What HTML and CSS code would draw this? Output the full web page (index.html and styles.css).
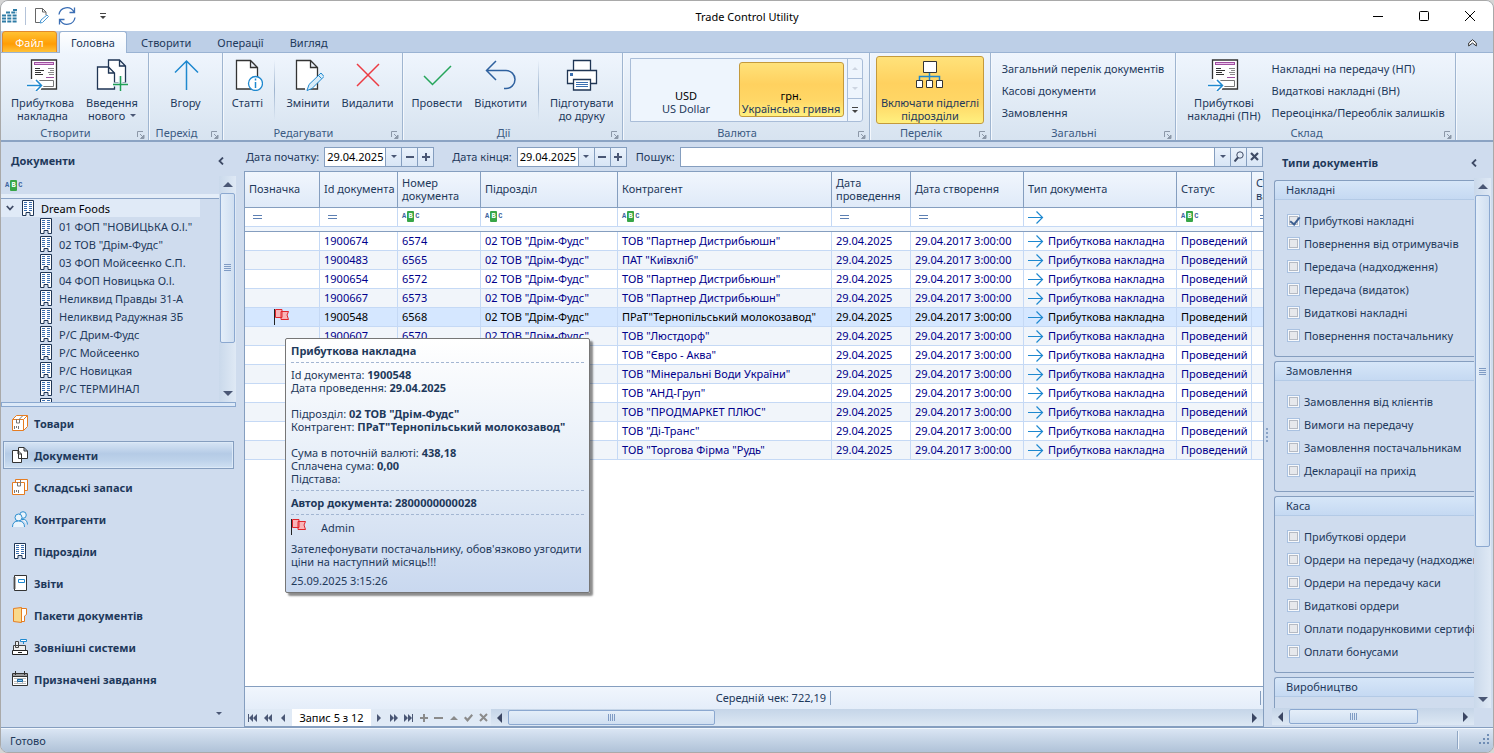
FILE: index.html
```html
<!DOCTYPE html>
<html lang="uk">
<head>
  <meta charset="UTF-8" />
  <meta name="viewport" content="width=device-width, initial-scale=1" />
  <title>Trade Control Utility</title>
  <link rel="stylesheet" href="styles.css">
</head>
<body>
  <!-- Icons used more than once -->
  <svg class="sprite" aria-hidden="true">
    <symbol id="i-invoice" viewBox="0 0 32 32">
      <path d="M4.500 20V1H29.500V30H14" fill="#fff" stroke="#333" stroke-width="1.300"/>
      <rect x="7.500" y="3.500" width="19" height="2" fill="#e9c3ea" stroke="#a04fa0"/>
      <path d="M8 9.500h5M8 11.500h9M8 13.500h6M8 15.500h8" stroke="#333"/>
      <path d="M21 9.500h6M23 11.500h4M21 13.500h6M22 15.500h5" stroke="#888"/>
      <path d="M19 18.500h8" stroke="#a04fa0"/>
      <path d="M12 21.500h14.500v6H14" fill="#fff" stroke="#777"/>
      <path d="M0 26.500H14M9 21l5.500 5.500L9 32" fill="none" stroke="#fff" stroke-width="4"/>
      <path d="M0 26.500H14M9 21l5.500 5.500L9 32" fill="none" stroke="#1e88cf" stroke-width="1.500"/>
    </symbol>
    <symbol id="i-building" viewBox="0 0 12 16">
      <path d="M.5.500h11v15H8v-3H4v3H.500z" fill="#fff" stroke="#1f3554"/>
      <path d="M2 2.500h3M7 2.500h3M2 4.500h3M7 4.500h3M2 6.500h3M7 6.500h3M2 8.500h3M7 8.500h3M2 10.500h3M7 10.500h3" stroke="#3b6fb0"/>
    </symbol>
    <symbol id="i-arrow" viewBox="0 0 16 14">
      <path d="M0 7.500h15M8.500 1.500l6 6-6 6" fill="none" stroke="#1e88cf" stroke-width="1.200"/>
    </symbol>
    <symbol id="i-flag" viewBox="0 0 16 16">
      <path d="M1.500.500H8v8H1.500zM8 2.500h6.500L13 6l1.500 4.500H7V2.500z" fill="#f9b4b8" stroke="#e0262c"/>
      <path d="M.5 0v16" stroke="#222"/>
    </symbol>
    <symbol id="i-box" viewBox="0 0 16 16">
      <path d="M.5 4.500l4-4h11v11l-4 4M11.500 4.500l4-4" fill="#fff" stroke="#e57d22"/>
      <path d="M.5 4.500h11v11H.500z" fill="#fff" stroke="#e57d22"/>
      <path d="M4.500 4v4h3V4l3-3M2.500 11v3M4.500 11v2M6.500 11v3" fill="none" stroke="#777"/>
    </symbol>
    <symbol id="i-stock" viewBox="0 0 16 16">
      <path d="M3.500.500h12v11h-12z" fill="#fff" stroke="#e57d22"/>
      <path d="M.5 3.500h12v12H.500z" fill="#fff" stroke="#e57d22"/>
      <path d="M5.500 3v4h3V3M8.500 1v2M2.500 11v3M4.500 11v2M6.500 11v3" fill="none" stroke="#777"/>
    </symbol>
    <symbol id="i-docs" viewBox="0 0 32 32">
      <path d="M12.500 1h11l6 6V24H12.500zM23.500 1v6h6" fill="#fff" stroke="#1f3554" stroke-width="1.300"/>
      <path d="M1.500 8h11l6 6V30H1.500zM12.500 8v6h6" fill="#fff" stroke="#1f3554" stroke-width="1.300"/>
    </symbol>
    <symbol id="i-launch" viewBox="0 0 8 8">
      <path d="M.5 6V.500H6" fill="none" stroke="#8c98a8"/>
      <path d="M3 3l3 3M7 4v3.500H3.500z" fill="#8c98a8" stroke="#8c98a8"/>
    </symbol>
  </svg>

  <header class="titlebar">
    <div class="quick">
      <svg width="15" height="14" viewBox="0 0 15 14"><path d="M0 12.500h15M0 9.500h15M0 6.500h15M4 3.500h11M11 .800h4" stroke="#2f7ca6" stroke-width="2.200" stroke-dasharray="4 1.300"/></svg>
      <span class="quick-line"></span>
      <button aria-label="Змінити"><svg width="16" height="16" viewBox="0 0 16 16"><path d="M6 14.500H1.500V.500h7l3.500 3.500v3M8.500 .500V4H12" fill="none" stroke="#666"/><path d="M6 15l1-3 6-5 1.500 1.500-6 6z" fill="#fff" stroke="#4a98d3"/></svg></button>
      <button aria-label="Оновити"><svg width="18" height="18" viewBox="0 0 18 18"><path d="M1 7.500A8 8 0 0 1 16 5M17 10.500A8 8 0 0 1 2 13M16.500 .500V5.500H11.500M1.500 17.500V12.500H6.500" fill="none" stroke="#3c6fb5" stroke-width="1.300"/></svg></button>
      <button class="quick-more" aria-label="Налаштувати"><svg width="6" height="6" viewBox="0 0 6 6"><path d="M0 .500h6" stroke="#444"/><path d="M0 3h6L3 6z" fill="#444"/></svg></button>
    </div>
    <h1>Trade Control Utility</h1>
    <div class="window-buttons">
      <button aria-label="Згорнути"><svg width="10" height="10"><path d="M0 5.500h10" stroke="#000"/></svg></button>
      <button aria-label="Розгорнути"><svg width="10" height="10"><rect x=".5" y=".5" width="9" height="9" rx="1" fill="none" stroke="#000"/></svg></button>
      <button aria-label="Закрити"><svg width="10" height="10"><path d="M0 0l10 10M10 0L0 10" stroke="#000"/></svg></button>
    </div>
  </header>

  <nav class="tabs">
    <button class="tab tab-file">Файл</button>
    <button class="tab tab-active">Головна</button>
    <button class="tab">Створити</button>
    <button class="tab">Операції</button>
    <button class="tab">Вигляд</button>
    <button class="collapse" aria-label="Згорнути стрічку"><svg width="9" height="8" viewBox="0 0 9 8"><path d="M.7 4l3.800-3.300L8.300 4v3L4.500 4 .700 7z" fill="#fff" stroke="#333"/></svg></button>
  </nav>

  <section class="ribbon">
    <div class="group g-create">
      <div class="group-body">
        <button class="big"><svg width="32" height="32"><use href="#i-invoice"/></svg><span>Прибуткова<br>накладна</span></button>
        <button class="big"><svg width="32" height="32" viewBox="0 0 32 32"><use href="#i-docs" width="32" height="32"/><path d="M24.500 17v15M17 25.500h15" stroke="#e9f1fa" stroke-width="4"/><path d="M24.500 17v15M17 25.500h15" stroke="#1fa055" stroke-width="1.500"/></svg><span>Введення<br>нового <i class="down"></i></span></button>
      </div>
      <div class="caption">Створити<svg width="8" height="8"><use href="#i-launch"/></svg></div>
    </div>
    <div class="group g-go">
      <div class="group-body">
        <button class="big"><svg width="32" height="32" viewBox="0 0 32 32"><path d="M16.500 31V2M5 13.500L16.500 2 28 13.500" fill="none" stroke="#1e88cf" stroke-width="1.500"/></svg><span>Вгору</span></button>
      </div>
      <div class="caption">Перехід<svg width="8" height="8"><use href="#i-launch"/></svg></div>
    </div>
    <div class="group g-edit">
      <div class="group-body">
        <button class="big"><svg width="32" height="32" viewBox="0 0 32 32"><path d="M5.500 1.500h14l7 7V30H5.500zM19.500 1.500v7h7" fill="#fff" stroke="#333" stroke-width="1.300"/><circle cx="24.500" cy="24.500" r="7" fill="#fff" stroke="#1e88cf" stroke-width="1.300"/><path d="M24.500 23v6M24.500 19.500v2" stroke="#1e88cf" stroke-width="1.500"/></svg><span>Статті</span></button>
        <span class="divider"></span>
        <button class="big"><svg width="32" height="32" viewBox="0 0 32 32"><path d="M13 30H4.500V1.500h14l7 7V30H18M18.500 1.500v7h7" fill="#fff" stroke="#333" stroke-width="1.300"/><path d="M15 31.500l2-6L29 14l3 3.500L20 29.500z" fill="#d9ecf9" stroke="#1e88cf"/><path d="M26.500 16.500l3 3" stroke="#1e88cf"/></svg><span>Змінити</span></button>
        <button class="big"><svg width="32" height="32" viewBox="0 0 32 32"><path d="M5 5l22 22M27 5L5 27" stroke="#ec3b43" stroke-width="1.500"/></svg><span>Видалити</span></button>
      </div>
      <div class="caption">Редагувати<svg width="8" height="8"><use href="#i-launch"/></svg></div>
    </div>
    <div class="group g-act">
      <div class="group-body">
        <button class="big"><svg width="32" height="32" viewBox="0 0 32 32"><path d="M3 17l8.500 8.500L30 7" fill="none" stroke="#25a55b" stroke-width="1.500"/></svg><span>Провести</span></button>
        <button class="big"><svg width="32" height="32" viewBox="0 0 32 32"><path d="M11 2L1.500 11.500 11 21M2 11.500H21a9 9 0 0 1 0 18h-2" fill="none" stroke="#2f619f" stroke-width="1.500"/></svg><span>Відкотити</span></button>
        <span class="divider"></span>
        <button class="big"><svg width="32" height="32" viewBox="0 0 32 32"><path d="M7.500 12V1.500h17V12M1.500 11.500h29v13h-29z" fill="#fff" stroke="#1f3554" stroke-width="1.300"/><path d="M7.500 20.500h17v10.500h-17z" fill="#fff" stroke="#1f3554" stroke-width="1.300"/><path d="M4 14h3v3H4z" fill="#3b6fb0"/><path d="M10 23.500h12M10 25.500h12M10 27.500h12" stroke="#3b6fb0"/></svg><span>Підготувати<br>до друку</span></button>
      </div>
      <div class="caption">Дії<svg width="8" height="8"><use href="#i-launch"/></svg></div>
    </div>
    <div class="group g-currency">
      <div class="group-body">
        <div class="gallery">
          <button class="currency"><b>USD</b>US Dollar</button>
          <button class="currency currency-on"><b>грн.</b>Українська гривня</button>
          <div class="gallery-scroll">
            <button aria-label="Вгору" disabled><i class="up"></i></button>
            <button aria-label="Вниз" disabled><i class="down"></i></button>
            <button aria-label="Більше"><svg width="6" height="6" viewBox="0 0 6 6"><path d="M0 .500h6" stroke="#444"/><path d="M0 3h6L3 6z" fill="#444"/></svg></button>
          </div>
        </div>
      </div>
      <div class="caption">Валюта<svg width="8" height="8"><use href="#i-launch"/></svg></div>
    </div>
    <div class="group g-list">
      <div class="group-body">
        <button class="big big-on"><svg width="32" height="32" viewBox="0 0 32 32"><path d="M15.500 14v4M5.500 22v-4.500h20V22M15.500 18v4" fill="none" stroke="#1e88cf" stroke-width="1.500"/><path d="M9.500 2.500h13v11h-13zM2.500 21.500h6v7h-6zM12.500 21.500h6v7h-6zM22.500 21.500h6v7h-6z" fill="#fff" stroke="#333"/></svg><span>Включати підлеглі<br>підрозділи</span></button>
      </div>
      <div class="caption">Перелік<svg width="8" height="8"><use href="#i-launch"/></svg></div>
    </div>
    <div class="group g-general">
      <div class="group-body">
        <div class="small-list">
          <button>Загальний перелік документів</button>
          <button>Касові документи</button>
          <button>Замовлення</button>
        </div>
      </div>
      <div class="caption">Загальні<svg width="8" height="8"><use href="#i-launch"/></svg></div>
    </div>
    <div class="group g-stock">
      <div class="group-body">
        <button class="big"><svg width="32" height="32"><use href="#i-invoice"/></svg><span>Прибуткові<br>накладні (ПН)</span></button>
        <div class="small-list">
          <button>Накладні на передачу (НП)</button>
          <button>Видаткові накладні (ВН)</button>
          <button>Переоцінка/Переоблік залишків</button>
        </div>
      </div>
      <div class="caption">Склад<svg width="8" height="8"><use href="#i-launch"/></svg></div>
    </div>
  </section>

  <main class="workspace">
    <aside class="sidebar">
      <h2>Документи<svg width="6" height="8" viewBox="0 0 6 8"><path d="M5 .500L1.500 4 5 7.500" fill="none" stroke="#3f4b66" stroke-width="1.800"/></svg></h2>
      <div class="tree-box">
        <div class="tree-main">
          <div class="tree-filter"><span class="abc"><i>A</i><i>B</i><i>C</i></span></div>
          <ul class="tree" id="tree">
            <li class="tree-root"><svg width="8" height="6" viewBox="0 0 8 6"><path d="M.8 1L4 4.500 7.200 1" fill="none" stroke="#3f4b66" stroke-width="1.800"/></svg><svg width="12" height="16"><use href="#i-building"/></svg>Dream Foods</li>
          </ul>
        </div>
        <div class="vscroll">
          <button aria-label="Вгору"><i class="up"></i></button>
          <div class="track"><div class="thumb tree-thumb"></div></div>
          <button aria-label="Вниз"><i class="down"></i></button>
        </div>
      </div>
      <div class="splitter"></div>
      <nav class="sections">
        <a href="#"><svg width="16" height="16"><use href="#i-box"/></svg>Товари</a>
        <a href="#" class="current"><svg width="16" height="16" viewBox="0 0 16 16"><path d="M6.500.500H12L15.500 4v7.500h-9zM12 .500V4h3.500M.5 3.500H6L9.500 7v8.500h-9zM6 3.500V7h3.500" fill="#fff" stroke="#333"/></svg>Документи</a>
        <a href="#"><svg width="16" height="16"><use href="#i-stock"/></svg>Складські запаси</a>
        <a href="#"><svg width="16" height="16" viewBox="0 0 16 16"><g fill="#eaf4fc" stroke="#2d8fd0"><circle cx="11" cy="4" r="3.300"/><path d="M10 8.500q5-1 5.500 5"/><circle cx="6.500" cy="6.500" r="3.500"/><path d="M.5 16q0-6 6-6t6 6"/></g></svg>Контрагенти</a>
        <a href="#"><svg width="16" height="16"><use href="#i-building"/></svg>Підрозділи</a>
        <a href="#"><svg width="16" height="16" viewBox="0 0 16 16"><path d="M2.500.500h12v15h-12z" fill="#fff" stroke="#333"/><path d="M1 3h3M1 5h3M1 7h3M1 9h3M1 11h3M1 13h3" stroke="#666"/><path d="M6.500 4.500h6v3h-6z" fill="#fff" stroke="#1e88cf"/></svg>Звіти</a>
        <a href="#"><svg width="16" height="16" viewBox="0 0 16 16"><path d="M9 1.500h5.500v6l-2 1.500v5.500H9z" fill="#fff" stroke="#e57d22"/><path d="M1.500 1.500L9.500.500v15l-8-1z" fill="#f9d98b" stroke="#e57d22"/></svg>Пакети документів</a>
        <a href="#"><svg width="16" height="16" viewBox="0 0 16 16"><path d="M1.500 6.500h12V12h-12zM3.500 2.500h3v6h-3z" fill="#eee" stroke="#444"/><path d="M.5 11.500h15v4H.500z" fill="#fff" stroke="#222"/><path d="M6 13.500h4" stroke="#222"/><path d="M8.500.500h6v2h-6zM11.500 3v2" fill="#fff" stroke="#1e88cf"/></svg>Зовнішні системи</a>
        <a href="#"><svg width="16" height="16" viewBox="0 0 16 16"><path d="M.5 2.500h15v12H.500z" fill="#fff" stroke="#333"/><path d="M1 3h14v2H1z" fill="#999"/><path d="M0 5.500h16M3.500 0v4M12.500 0v4" stroke="#333"/><path d="M2 7.500h12M2 10.500h12M2 12.500h12M5.500 7v6M10.500 7v6" stroke="#bbb"/><path d="M5.500 8.500h5v2h-5z" fill="#8cc6ee" stroke="#1565a0"/></svg>Призначені завдання</a>
      </nav>
      <button class="sections-more" aria-label="Ще"><i class="down"></i></button>
    </aside>

    <section class="center">
      <form class="filters">
        <label for="from">Дата початку:</label>
        <div class="field"><input id="from" type="text" value="29.04.2025"><button type="button" aria-label="Календар"><i class="down"></i></button><button type="button" aria-label="Менше"><i class="minus"></i></button><button type="button" aria-label="Більше"><i class="minus plus"></i></button></div>
        <label for="to">Дата кінця:</label>
        <div class="field"><input id="to" type="text" value="29.04.2025"><button type="button" aria-label="Календар"><i class="down"></i></button><button type="button" aria-label="Менше"><i class="minus"></i></button><button type="button" aria-label="Більше"><i class="minus plus"></i></button></div>
        <label for="search">Пошук:</label>
        <div class="field field-search"><input id="search" type="text"><button type="button" aria-label="Історія"><i class="down"></i></button><button type="button" aria-label="Шукати"><svg width="10" height="11" viewBox="0 0 10 11"><circle cx="6" cy="4" r="3.200" fill="none" stroke="#3f4b66"/><path d="M4 6.500L.5 10.500" stroke="#3f4b66" stroke-width="2"/></svg></button><button type="button" aria-label="Очистити"><svg width="9" height="9" viewBox="0 0 9 9"><path d="M1 1l7 7M8 1L1 8" stroke="#3f4b66" stroke-width="2.200"/></svg></button></div>
      </form>

      <div class="grid">
        <div class="grid-scroll">
          <table>
            <colgroup>
              <col class="c-mark"><col class="c-id"><col class="c-num"><col class="c-dep"><col class="c-agent"><col class="c-date"><col class="c-created"><col class="c-type"><col class="c-status"><col>
            </colgroup>
            <thead>
              <tr>
                <th>Позначка</th><th>Id документа</th><th>Номер<br>документа</th><th>Підрозділ</th><th>Контрагент</th><th>Дата<br>проведення</th><th>Дата створення</th><th>Тип документа</th><th>Статус</th><th>Сума<br>валюти</th>
              </tr>
              <tr class="filter-row">
                <td><span class="eq"></span></td><td><span class="eq"></span></td>
                <td><span class="abc"><i>A</i><i>B</i><i>C</i></span></td>
                <td><span class="abc"><i>A</i><i>B</i><i>C</i></span></td>
                <td><span class="abc"><i>A</i><i>B</i><i>C</i></span></td>
                <td><span class="eq"></span></td><td><span class="eq"></span></td>
                <td><svg width="16" height="14"><use href="#i-arrow"/></svg></td>
                <td><span class="abc"><i>A</i><i>B</i><i>C</i></span></td><td><span class="eq"></span></td>
              </tr>
              <tr class="band"><td colspan="10"></td></tr>
            </thead>
            <tbody id="rows"></tbody>
          </table>
        </div>
        <div class="summary"><span class="average">Середній чек: 722,19</span><span class="end-line"></span></div>
        <div class="navigator">
          <div class="nav-buttons">
            <button aria-label="Перший"><svg width="9" height="8"><path d="M0 0h1v8H0zM5 0v8L1 4zM9 0v8L5 4z"/></svg></button>
            <button aria-label="Назад на сторінку"><svg width="8" height="8"><path d="M4 0v8L0 4zM8 0v8L4 4z"/></svg></button>
            <button aria-label="Назад"><svg width="4" height="8"><path d="M4 0v8L0 4z"/></svg></button>
            <span class="record">Запис 5 з 12</span>
            <button aria-label="Вперед"><svg width="4" height="8"><path d="M0 0v8l4-4z"/></svg></button>
            <button aria-label="Вперед на сторінку"><svg width="8" height="8"><path d="M0 0v8l4-4zM4 0v8l4-4z"/></svg></button>
            <button aria-label="Останній"><svg width="9" height="8"><path d="M0 0v8l4-4zM4 0v8l4-4zM8 0h1v8H8z"/></svg></button>
            <button class="off" aria-label="Додати"><svg width="8" height="8"><path d="M3 0h2v3h3v2H5v3H3V5H0V3h3z"/></svg></button>
            <button class="off" aria-label="Видалити"><svg width="9" height="8"><path d="M0 3h9v2H0z"/></svg></button>
            <button class="off" aria-label="Редагувати"><svg width="8" height="8"><path d="M0 6h8L4 2z"/></svg></button>
            <button class="off" aria-label="Зберегти"><svg width="9" height="8"><path d="M0 4l1.500-1.500L3.500 4.500 7.500 0 9 1.500 3.500 8z"/></svg></button>
            <button class="off" aria-label="Скасувати"><svg width="9" height="9"><path d="M1 1l7 7M8 1L1 8" stroke="#8b8b8b" stroke-width="2"/></svg></button>
          </div>
          <div class="hscroll">
            <button aria-label="Вліво"><i class="left"></i></button>
            <div class="track"><div class="thumb grid-thumb"></div></div>
            <button aria-label="Вправо"><i class="right"></i></button>
          </div>
        </div>
      </div>

      <div class="tooltip" role="tooltip">
        <p><b>Прибуткова накладна</b></p>
        <hr>
        <p>Id документа: <b>1900548</b><br>Дата проведення: <b>29.04.2025</b><br><br>Підрозділ: <b>02 ТОВ "Дрім-Фудс"</b><br>Контрагент: <b>ПРаТ"Тернопільський молокозавод"</b><br><br>Сума в поточній валюті: <b>438,18</b><br>Сплачена сума: <b>0,00</b><br>Підстава:</p>
        <hr>
        <p><b>Автор документа: 2800000000028</b></p>
        <hr>
        <p class="author"><svg width="16" height="16"><use href="#i-flag"/></svg>Admin</p>
        <p class="note">Зателефонувати постачальнику, обов'язково узгодити<br>ціни на наступний місяць!!!</p>
        <p>25.09.2025 3:15:26</p>
      </div>
    </section>

    <div class="grip"></div>

    <aside class="types">
      <h2>Типи документів<svg width="6" height="8" viewBox="0 0 6 8"><path d="M5 .500L1.500 4 5 7.500" fill="none" stroke="#3f4b66" stroke-width="1.800"/></svg></h2>
      <div class="types-box">
        <div class="types-list">
          <fieldset>
            <legend>Накладні</legend>
            <label><input type="checkbox" checked>Прибуткові накладні</label>
            <label><input type="checkbox">Повернення від отримувачів</label>
            <label><input type="checkbox">Передача (надходження)</label>
            <label><input type="checkbox">Передача (видаток)</label>
            <label><input type="checkbox">Видаткові накладні</label>
            <label><input type="checkbox">Повернення постачальнику</label>
          </fieldset>
          <fieldset>
            <legend>Замовлення</legend>
            <label><input type="checkbox">Замовлення від клієнтів</label>
            <label><input type="checkbox">Вимоги на передачу</label>
            <label><input type="checkbox">Замовлення постачальникам</label>
            <label><input type="checkbox">Декларації на прихід</label>
          </fieldset>
          <fieldset>
            <legend>Каса</legend>
            <label><input type="checkbox">Прибуткові ордери</label>
            <label><input type="checkbox">Ордери на передачу (надходження)</label>
            <label><input type="checkbox">Ордери на передачу каси</label>
            <label><input type="checkbox">Видаткові ордери</label>
            <label><input type="checkbox">Оплати подарунковими сертифікатами</label>
            <label><input type="checkbox">Оплати бонусами</label>
          </fieldset>
          <fieldset>
            <legend>Виробництво</legend>
          </fieldset>
        </div>
        <div class="vscroll">
          <button aria-label="Вгору"><i class="up"></i></button>
          <div class="track"><div class="thumb types-thumb"></div></div>
          <button aria-label="Вниз"><i class="down"></i></button>
        </div>
        <div class="hscroll">
          <button aria-label="Вліво"><i class="left"></i></button>
          <div class="track"><div class="thumb types-hthumb"></div></div>
          <button aria-label="Вправо"><i class="right"></i></button>
        </div>
      </div>
    </aside>
  </main>

  <footer class="statusbar">
    <span>Готово</span>
    <span class="status-line"></span>
    <svg width="12" height="12" viewBox="0 0 12 12"><path d="M8 0h2v2H8zM4 4h2v2H4zM8 4h2v2H8zM0 8h2v2H0zM4 8h2v2H4zM8 8h2v2H8z" fill="#6f8db5"/></svg>
  </footer>

  <script>
    const departments = [
      '01 ФОП "НОВИЦЬКА О.І."', '02 ТОВ "Дрім-Фудс"', "03 ФОП Мойсеєнко С.П.",
      "04 ФОП Новицька О.І.", "Неликвид Правды 31-А", "Неликвид Радужная 3Б",
      "Р/С Дрим-Фудс", "Р/С Мойсеенко", "Р/С Новицкая", "Р/С ТЕРМИНАЛ", "Резервный МК"
    ];

    const documents = [
      ["1900674", "6574", 'ТОВ "Партнер Дистрибьюшн"'],
      ["1900483", "6565", 'ПАТ "Київхліб"'],
      ["1900654", "6572", 'ТОВ "Партнер Дистрибьюшн"'],
      ["1900667", "6573", 'ТОВ "Партнер Дистрибьюшн"'],
      ["1900548", "6568", 'ПРаТ"Тернопільський молокозавод"'],
      ["1900607", "6570", 'ТОВ "Люстдорф"'],
      ["1900612", "6571", 'ТОВ "Євро - Аква"'],
      ["1900539", "6567", 'ТОВ "Мінеральні Води України"'],
      ["1900521", "6566", 'ТОВ "АНД-Груп"'],
      ["1900476", "6564", 'ТОВ "ПРОДМАРКЕТ ПЛЮС"'],
      ["1900588", "6569", 'ТОВ "Ді-Транс"'],
      ["1900462", "6563", 'ТОВ "Торгова Фірма "Рудь"']
    ];
    const selectedId = "1900548";

    const tree = document.getElementById("tree");
    departments.forEach(name => {
      tree.insertAdjacentHTML("beforeend",
        `<li><svg width="12" height="16"><use href="#i-building"/></svg>${name}</li>`);
    });

    const rows = document.getElementById("rows");
    documents.forEach(([id, number, agent]) => {
      const selected = id === selectedId;
      const flag = selected ? '<svg width="16" height="16"><use href="#i-flag"/></svg>' : "";
      rows.insertAdjacentHTML("beforeend", `
        <tr class="${selected ? "selected" : ""}">
          <td class="mark">${flag}</td><td>${id}</td><td>${number}</td>
          <td>02 ТОВ "Дрім-Фудс"</td><td>${agent}</td>
          <td>29.04.2025</td><td>29.04.2017 3:00:00</td>
          <td><svg width="16" height="14"><use href="#i-arrow"/></svg>Прибуткова накладна</td>
          <td>Проведений</td><td></td>
        </tr>`);
    });
  </script>
</body>
</html>
```
FILE: styles.css
```css
* {
  box-sizing: border-box;
}

html {
  background: #d5d5d5;
}

body {
  margin: 0;
  height: 100vh;
  display: flex;
  flex-direction: column;
  overflow: hidden;
  border: 1px solid #a9a9a9;
  border-radius: 8px;
  background: #cfdcee;
  color: #1e395b;
  font: 11px/13px "Noto Sans", "Open Sans", sans-serif;
}

h1, h2, p, ul, fieldset {
  margin: 0;
  padding: 0;
}

button {
  padding: 0;
  border: 0;
  background: none;
  color: inherit;
  font: inherit;
}

svg {
  flex: none;
}

.sprite {
  position: absolute;
  width: 0;
  height: 0;
}

/* Small triangles */
.up, .down, .left, .right {
  display: inline-block;
  border: 5px solid transparent;
}

.down {
  border-top-color: #4a5775;
  border-bottom: 0;
}

.up {
  border-bottom-color: #4a5775;
  border-top: 0;
}

.left {
  border-right-color: #3b4663;
  border-left: 0;
}

.right {
  border-left-color: #3b4663;
  border-right: 0;
}

/* Title bar */
.titlebar {
  flex: none;
  height: 30px;
  display: grid;
  grid-template-columns: 1fr auto 1fr;
  align-items: center;
  background: #fff;
}

.titlebar h1 {
  font-size: 11px;
  font-weight: 400;
  color: #000;
}

.titlebar button {
  display: flex;
}

.quick {
  display: flex;
  align-items: center;
  gap: 8px;
  padding-left: 1px;
}

.quick-line {
  width: 1px;
  height: 18px;
  background: #b4c3d9;
}

.quick-more {
  margin-left: 16px;
}

.window-buttons {
  display: flex;
  justify-content: flex-end;
  gap: 36px;
  padding-right: 18px;
}

/* Tabs */
.tabs {
  flex: none;
  display: flex;
  gap: 2px;
  height: 22px;
  padding-left: 1px;
  background: #bdcfe7;
}

.tab {
  padding: 0 12px;
}

.tab-file {
  width: 55px;
  border: 1px solid #e08a2c;
  border-radius: 3px 3px 0 0;
  background: linear-gradient(#ffc233, #ff9d05 60%, #ffc23a);
  color: #fff;
}

.tab-active {
  position: relative;
  z-index: 1;
  width: 68px;
  padding: 0;
  border: 1px solid #9ab3d3;
  border-bottom: 0;
  border-radius: 3px 3px 0 0;
  background: linear-gradient(#fff, #eff5fd);
}

.collapse {
  margin-left: auto;
  padding-right: 16px;
}

/* Ribbon */
.ribbon {
  flex: none;
  display: flex;
  height: 90px;
  margin-top: -1px;
  border-top: 1px solid #9ab3d3;
  border-bottom: 2px solid #8ba3c3;
  background: linear-gradient(#eff5fd, #e4edf7 45%, #d7e3f0);
}

.group {
  flex: none;
  display: flex;
  flex-direction: column;
  border-right: 1px solid #9fb5d0;
  box-shadow: 1px 0 #f4f8fd;
}

.group-body {
  flex: 1;
  display: flex;
  justify-content: center;
  padding: 3px 6px 0;
}

.caption {
  position: relative;
  height: 14px;
  padding-right: 18px;
  line-height: 14px;
  text-align: center;
  color: #3b5a82;
}

.caption svg {
  position: absolute;
  right: 3px;
  bottom: 1px;
}

.g-create { width: 148px; }
.g-go { width: 74px; }
.g-edit { width: 180px; }
.g-act { width: 220px; }
.g-currency { width: 247px; }
.g-list { width: 121px; }
.g-general { width: 185px; }
.g-stock { width: 280px; }

.g-create .group-body,
.g-edit .group-body,
.g-act .group-body,
.g-stock .group-body {
  gap: 10px;
}

.big {
  display: flex;
  flex-direction: column;
  align-items: center;
  justify-content: flex-start;
  gap: 5px;
  height: 68px;
  padding-top: 2px;
  border: 1px solid transparent;
  white-space: nowrap;
}

.big .down {
  border-width: 3px;
  border-bottom: 0;
  margin: 0 0 3px 2px;
}

.big-on, .currency-on {
  border: 1px solid #c49a3c;
  border-radius: 3px;
  background: linear-gradient(#ffe27a, #ffd15f 40%, #ffd766 70%, #fff07f);
}

.big-on {
  width: 108px;
}

.divider {
  width: 1px;
  height: 60px;
  margin-top: 4px;
  background: linear-gradient(transparent, #9db3ce, transparent);
}

.gallery {
  display: flex;
  width: 233px;
  height: 64px;
  margin-top: 2px;
  border: 1px solid #a9bdd8;
  border-radius: 0 3px 3px 0;
  background: #eef5fd;
}

.currency {
  flex: 1;
  margin: 3px 3px 4px 6px;
  padding-top: 24px;
  white-space: nowrap;
}

.currency b {
  display: block;
  color: #000;
  font-weight: 400;
}

.currency-on {
  flex: none;
  width: 105px;
  margin-left: 0;
}

.gallery-scroll {
  display: grid;
  width: 15px;
  border-left: 1px solid #a9bdd8;
}

.gallery-scroll button {
  display: flex;
  align-items: center;
  justify-content: center;
}

.gallery-scroll button + button {
  border-top: 1px solid #a9bdd8;
}

.gallery-scroll i {
  border-width: 3px;
  opacity: 0.2;
}

.gallery-scroll .up {
  border-top: 0;
}

.gallery-scroll .down {
  border-bottom: 0;
}

.small-list {
  display: flex;
  flex-direction: column;
  gap: 9px;
  padding-top: 6px;
}

.small-list button {
  text-align: left;
  white-space: nowrap;
}

/* Workspace */
.workspace {
  flex: 1;
  min-height: 0;
  display: flex;
}

h2 {
  display: flex;
  align-items: center;
  justify-content: space-between;
  font-size: 11px;
  line-height: 13px;
}

.sidebar {
  flex: none;
  width: 235px;
  display: flex;
  flex-direction: column;
}

.sidebar h2 {
  padding: 12px 12px 9px 10px;
}

.tree-box {
  flex: 1;
  min-height: 0;
  display: flex;
}

.tree-main {
  flex: 1;
  overflow: hidden;
}

.tree-filter {
  height: 23px;
  padding: 4px;
  border-bottom: 1px solid #8aa3c6;
  box-shadow: inset 0 -4px #e4edf8;
}

.abc {
  display: flex;
  align-items: center;
  gap: 1px;
  color: #3c64a0;
  font: 700 7px/11px "Liberation Mono", monospace;
}

.abc i {
  font-style: normal;
}

.abc i:nth-child(2) {
  width: 7px;
  border-radius: 1px;
  background: #38a648;
  color: #fff;
  text-align: center;
}

.tree {
  list-style: none;
}

.tree li {
  display: flex;
  align-items: center;
  gap: 7px;
  height: 18px;
  padding-left: 39px;
  white-space: nowrap;
}

.tree .tree-root {
  width: 199px;
  padding-left: 5px;
  background: #e0eaf7;
  color: #000;
}

.tree-root svg:first-child {
  margin-right: 1px;
}

/* Scroll bars */
.vscroll {
  flex: none;
  width: 17px;
  display: flex;
  flex-direction: column;
  background: linear-gradient(90deg, #cad9eb, #dfe9f5);
}

.vscroll > button {
  height: 17px;
}

.hscroll {
  flex: 1;
  display: flex;
  height: 17px;
  background: linear-gradient(#c5d5e8, #dde8f4);
}

.hscroll > button {
  width: 17px;
}

.vscroll > button, .hscroll > button {
  display: flex;
  align-items: center;
  justify-content: center;
}

.track {
  flex: 1;
}

.thumb {
  position: relative;
  border: 1px solid #8ba8d0;
  border-radius: 2px;
  background: linear-gradient(90deg, #e4eef9, #d0dff1);
}

.vscroll .thumb {
  width: 15px;
  margin: 0 auto;
}

.hscroll .thumb {
  height: 15px;
  margin-top: 1px;
  background: linear-gradient(#e4eef9, #d0dff1);
}

.thumb::after {
  content: "";
  position: absolute;
  inset: 0;
  width: 7px;
  height: 7px;
  margin: auto;
  background: repeating-linear-gradient(#7f9bc4 0 1px, transparent 1px 2px);
}

.hscroll .thumb::after {
  background: repeating-linear-gradient(90deg, #7f9bc4 0 1px, transparent 1px 2px);
}

.tree-thumb { height: 78%; }
.types-thumb { height: 71%; }
.grid-thumb { width: 28%; }
.types-hthumb { width: 77%; }

.splitter {
  height: 5px;
  border: 1px solid #8aa8cf;
  background: #dce9f8;
}

.sections {
  padding: 2px 1px 0;
}

.sections a {
  display: flex;
  align-items: center;
  gap: 6px;
  height: 28px;
  margin: 0 1px 4px;
  padding-left: 8px;
  border: 1px solid transparent;
  color: #1e395b;
  font-weight: 700;
  text-decoration: none;
}

.sections .current {
  border-color: #859ebf;
  background: linear-gradient(#d7e5f5, #b5cbe6 45%, #bdd2ea 70%, #cfe0f2);
  box-shadow: inset 0 0 0 1px #dce9f7;
}

.sections-more {
  height: 30px;
  padding-left: 200px;
  padding-bottom: 4px;
}

.sections-more .down {
  border-width: 3px;
  border-bottom: 0;
}

/* Filters over the grid */
.center {
  position: relative;
  flex: 1;
  min-width: 0;
  display: flex;
  flex-direction: column;
  padding-left: 8px;
}

.filters {
  display: flex;
  align-items: center;
  gap: 5px;
  height: 29px;
  padding: 0 1px 0 2px;
}

.filters label {
  white-space: nowrap;
}

.field + label {
  margin-left: 13px;
}

.field + label[for="search"] {
  margin-left: 4px;
}

.field {
  display: flex;
  height: 20px;
  border: 1px solid #859ebf;
  background: #fff;
}

.field input {
  width: 60px;
  padding: 0 0 0 2px;
  border: 0;
  outline: 0;
  background: none;
  color: #000;
  font: inherit;
}

.field button {
  display: flex;
  align-items: center;
  justify-content: center;
  width: 16px;
  border-left: 1px solid #859ebf;
  background: linear-gradient(#eaf2fc, #d8e5f5);
}

.field .down {
  border-width: 3px;
  border-bottom: 0;
}

.field-search {
  flex: 1;
}

.field-search input {
  flex: 1;
}

.minus {
  position: relative;
  width: 8px;
  height: 2px;
  background: #4a5775;
}

.plus::after {
  content: "";
  position: absolute;
  left: 3px;
  top: -3px;
  width: 2px;
  height: 8px;
  background: #4a5775;
}

/* Grid */
.grid {
  flex: 1;
  min-height: 0;
  display: flex;
  flex-direction: column;
  border: 1px solid #859ebf;
  background: #fff;
}

.grid-scroll {
  flex: 1;
  min-height: 0;
  overflow: hidden;
}

table {
  width: 100%;
  table-layout: fixed;
  border-collapse: separate;
  border-spacing: 0;
}

.c-mark { width: 75px; }
.c-id { width: 78px; }
.c-num { width: 83px; }
.c-dep { width: 137px; }
.c-agent { width: 214px; }
.c-date { width: 79px; }
.c-created { width: 113px; }
.c-type { width: 153px; }
.c-status { width: 75px; }

th {
  height: 36px;
  padding: 0 0 2px 4px;
  overflow: hidden;
  border-right: 1px solid #859ebf;
  border-bottom: 1px solid #859ebf;
  background: linear-gradient(#f1f6fd, #dfeaf8);
  font-weight: 400;
  text-align: left;
  white-space: nowrap;
}

td {
  height: 19px;
  padding: 0 0 1px 4px;
  overflow: hidden;
  border-right: 1px solid #c5d9f5;
  border-bottom: 1px solid #c5d9f5;
  white-space: nowrap;
}

th:last-child, td:last-child {
  border-right: 0;
}

td svg {
  margin-right: 4px;
  vertical-align: -3px;
}

tbody td {
  color: #00008b;
}

tbody tr:nth-child(even) td {
  background: #f1f5fa;
}

tbody .selected:nth-child(n) td {
  background: #d5e7ff;
  color: #000;
}

td.mark {
  padding: 0;
}

td.mark svg {
  display: block;
  margin: 0 auto;
}

.filter-row .eq {
  display: block;
  width: 9px;
  height: 4px;
  margin-left: 4px;
  border: solid #5d80b3;
  border-width: 1px 0;
}

.band td {
  height: 5px;
  padding: 0;
  background: #f1f6fc;
  border-bottom-color: #859ebf;
}

.summary {
  display: flex;
  height: 23px;
  padding: 4px 2px 4px 0;
  border-top: 1px solid #859ebf;
  background: linear-gradient(#f1f6fd, #e4edf9);
}

.average {
  width: 586px;
  padding-right: 4px;
  border-right: 1px solid #859ebf;
  text-align: right;
}

.end-line {
  margin-left: auto;
  border-right: 1px solid #859ebf;
}

.navigator {
  display: flex;
  height: 17px;
  background: #e0eaf6;
}

.nav-buttons {
  display: flex;
  align-items: center;
}

.nav-buttons button {
  display: flex;
  justify-content: center;
  width: 15px;
}

.nav-buttons svg {
  fill: #4a5775;
}

.nav-buttons .off svg {
  fill: #8b8b8b;
}

.record {
  width: 79px;
  margin-left: 2px;
  background: #fff;
  color: #000;
  line-height: 17px;
  text-align: center;
}

/* Document tooltip */
.tooltip {
  position: absolute;
  left: 49px;
  top: 196px;
  width: 305px;
  padding: 5px;
  border: 1px solid #767676;
  border-radius: 2px;
  background: linear-gradient(#fff, #e6eef8 50%, #c9d8ef);
  box-shadow: 3px 3px 2px rgba(0, 0, 0, 0.45);
  white-space: nowrap;
}

.tooltip hr {
  height: 0;
  margin: 5px 0;
  border: 0;
  border-top: 1px dashed #a3b6d2;
}

.tooltip .author {
  display: flex;
  align-items: center;
  gap: 14px;
  height: 14px;
}

.tooltip .note {
  margin: 8px 0 6px;
}

.grip {
  flex: none;
  display: flex;
  align-items: center;
  width: 8px;
  padding-left: 2px;
}

.grip::before {
  content: "";
  width: 2px;
  height: 14px;
  background: repeating-linear-gradient(#8aa3c6 0 2px, transparent 2px 4px);
}

/* Document types */
.types {
  flex: none;
  width: 221px;
  display: flex;
  flex-direction: column;
  padding: 0 2px 2px 0;
}

.types h2 {
  padding: 14px 14px 9px 10px;
}

.types-box {
  flex: 1;
  min-height: 0;
  display: grid;
  grid-template: minmax(0, 1fr) 17px / minmax(0, 1fr) 17px;
}

.types-list {
  display: flex;
  flex-direction: column;
  gap: 4px;
  padding: 2px 0 0 2px;
  overflow: hidden;
}

fieldset {
  flex: none;
  min-width: 0;
  padding-bottom: 9px;
  overflow: hidden;
  border: 1px solid #859ebf;
  border-right: 0;
  border-radius: 3px 0 0 3px;
}

legend {
  float: left;
  width: 100%;
  height: 19px;
  margin-bottom: 9px;
  padding: 0 11px;
  border-bottom: 1px solid #b3cae6;
  background: linear-gradient(#d6e6f8, #c5d9f2);
  line-height: 18px;
}

fieldset label {
  clear: both;
  display: flex;
  align-items: center;
  gap: 4px;
  height: 23px;
  padding-left: 12px;
  white-space: nowrap;
}

fieldset input {
  flex: none;
  appearance: none;
  width: 13px;
  height: 13px;
  margin: 0;
  border: 1px solid #a9c1e0;
  background: #e6e8ec;
  box-shadow: inset 0 0 0 1px #f7f9fc, inset 0 0 0 2px #b5bac3;
}

fieldset input:checked::after {
  content: "";
  display: block;
  width: 4px;
  height: 8px;
  margin-left: 4px;
  border: solid #3d5f91;
  border-width: 0 2px 2px 0;
  transform: rotate(38deg);
}

/* Status bar */
.statusbar {
  flex: none;
  display: flex;
  align-items: center;
  height: 25px;
  padding: 0 2px 0 9px;
  border-top: 1px solid #859ebf;
  box-shadow: inset 0 1px #f2f7fd;
  background: linear-gradient(#dce7f5, #c5d4e6 50%, #b0c2d8);
}

.status-line {
  width: 2px;
  height: 18px;
  margin-left: auto;
  margin-right: 20px;
  border-left: 1px solid #8fa6c4;
  border-right: 1px solid #eef4fb;
}
```
